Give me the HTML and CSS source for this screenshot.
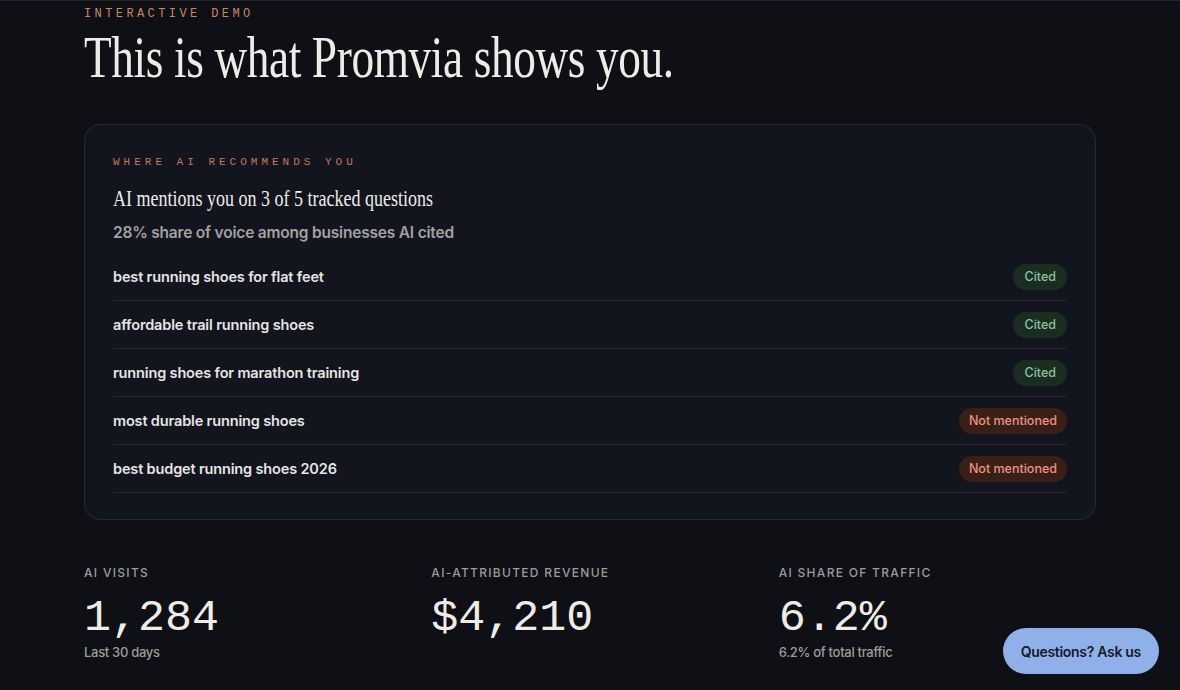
FILE: index.html
```html
<!DOCTYPE html>
<html lang="en">
<head>
<meta charset="utf-8">
<title>Promvia demo</title>
<link rel="stylesheet" href="styles.css">
</head>
<body>
<main class="demo">
  <p class="eyebrow">INTERACTIVE DEMO</p>
  <h1 class="title"><span class="cond">This is what Promvia shows you.</span></h1>

  <section class="card">
    <p class="eyebrow card-eyebrow">WHERE AI RECOMMENDS YOU</p>
    <h2 class="card-title"><span class="cond">AI mentions you on 3 of 5 tracked questions</span></h2>
    <p class="card-sub">28% share of voice among businesses AI cited</p>
    <ul class="rows">
      <li class="row"><span class="q">best running shoes for flat feet</span><span class="pill cited">Cited</span></li>
      <li class="row"><span class="q">affordable trail running shoes</span><span class="pill cited">Cited</span></li>
      <li class="row"><span class="q">running shoes for marathon training</span><span class="pill cited">Cited</span></li>
      <li class="row"><span class="q">most durable running shoes</span><span class="pill missing">Not mentioned</span></li>
      <li class="row"><span class="q">best budget running shoes 2026</span><span class="pill missing">Not mentioned</span></li>
    </ul>
  </section>

  <section class="stats">
    <div class="stat">
      <p class="stat-label">AI VISITS</p>
      <p class="stat-value">1,284</p>
      <p class="stat-note">Last 30 days</p>
    </div>
    <div class="stat">
      <p class="stat-label">AI-ATTRIBUTED REVENUE</p>
      <p class="stat-value">$4,210</p>
    </div>
    <div class="stat">
      <p class="stat-label">AI SHARE OF TRAFFIC</p>
      <p class="stat-value">6.2%</p>
      <p class="stat-note">6.2% of total traffic</p>
    </div>
  </section>
</main>
<button class="ask">Questions? Ask us</button>
</body>
</html>
```
FILE: styles.css
```css
* { box-sizing: border-box; }
html, body { margin: 0; padding: 0; }
body {
  background: #0e1015;
  color: #ecebe6;
  font-family: Inter, "Noto Sans", sans-serif;
  border-top: 1px solid #23252d;
  height: 690px;
  overflow: hidden;
}
p, h1, h2, ul { margin: 0; padding: 0; }
.demo {
  width: 1012px;
  margin: 0 auto;
  padding-top: 6px;
}
.eyebrow {
  font-family: "Liberation Mono", monospace;
  font-size: 12px;
  letter-spacing: 3.4px;
  color: #c98663;
  line-height: 14px;
}
.cond {
  display: inline-block;
  transform-origin: left center;
  white-space: nowrap;
}
.title {
  font-family: "Liberation Serif", serif;
  font-weight: 400;
  font-size: 60px;
  line-height: 64px;
  margin-top: 4px;
  color: #eeece6;
  letter-spacing: -0.5px;
}
.title .cond { transform: scaleX(0.755); }
.card {
  margin-top: 35px;
  background: #12151e;
  border: 1px solid #272a35;
  border-radius: 16px;
  padding: 30px 28px 26px 28px;
}
.card-eyebrow { color: #c4775a; letter-spacing: 4px; font-size: 11px; }
.card-title {
  font-family: "Liberation Serif", serif;
  font-weight: 400;
  font-size: 24px;
  line-height: 28px;
  margin-top: 15px;
  color: #eeece6;
}
.card-title .cond { transform: scaleX(0.75); }
.card-sub {
  margin-top: 11px;
  font-size: 15.5px;
  font-weight: 600;
  color: #a3a29e;
  letter-spacing: -0.2px;
}
.rows { list-style: none; margin-top: 11px; }
.row {
  display: flex;
  align-items: center;
  justify-content: space-between;
  height: 48px;
  border-bottom: 1px solid #242733;
}
.q {
  font-size: 14.5px;
  font-weight: 600;
  color: #e6e5e1;
  letter-spacing: -0.15px;
}
.pill {
  font-size: 12.5px;
  font-weight: 500;
  line-height: 26px;
  padding: 0 11px;
  border-radius: 13px;
}
.cited { background: #1b2c21; color: #86c79b; }
.missing { background: #3a1f19; color: #ec937c; padding: 0 10px; }
.stats {
  display: grid;
  grid-template-columns: repeat(3, 1fr);
  column-gap: 30px;
  margin-top: 45px;
}
.stat-label {
  font-size: 12px;
  font-weight: 500;
  letter-spacing: 1.3px;
  color: #9d9c98;
  line-height: 16px;
}
.stat-value {
  font-family: "Liberation Mono", monospace;
  font-size: 45px;
  line-height: 51px;
  margin-top: 12px;
  color: #eeece6;
}
.stat-note {
  font-size: 13px;
  font-weight: 500;
  color: #9d9c98;
  letter-spacing: -0.3px;
  line-height: 16px;
}
.ask {
  position: fixed;
  right: 21px;
  bottom: 16px;
  height: 46px;
  padding: 0 18px;
  border: 0;
  border-radius: 23px;
  background: #8fb0e8;
  color: #151a28;
  font-family: Inter, "Noto Sans", sans-serif;
  font-size: 14px;
  font-weight: 600;
  letter-spacing: -0.3px;
}
```
